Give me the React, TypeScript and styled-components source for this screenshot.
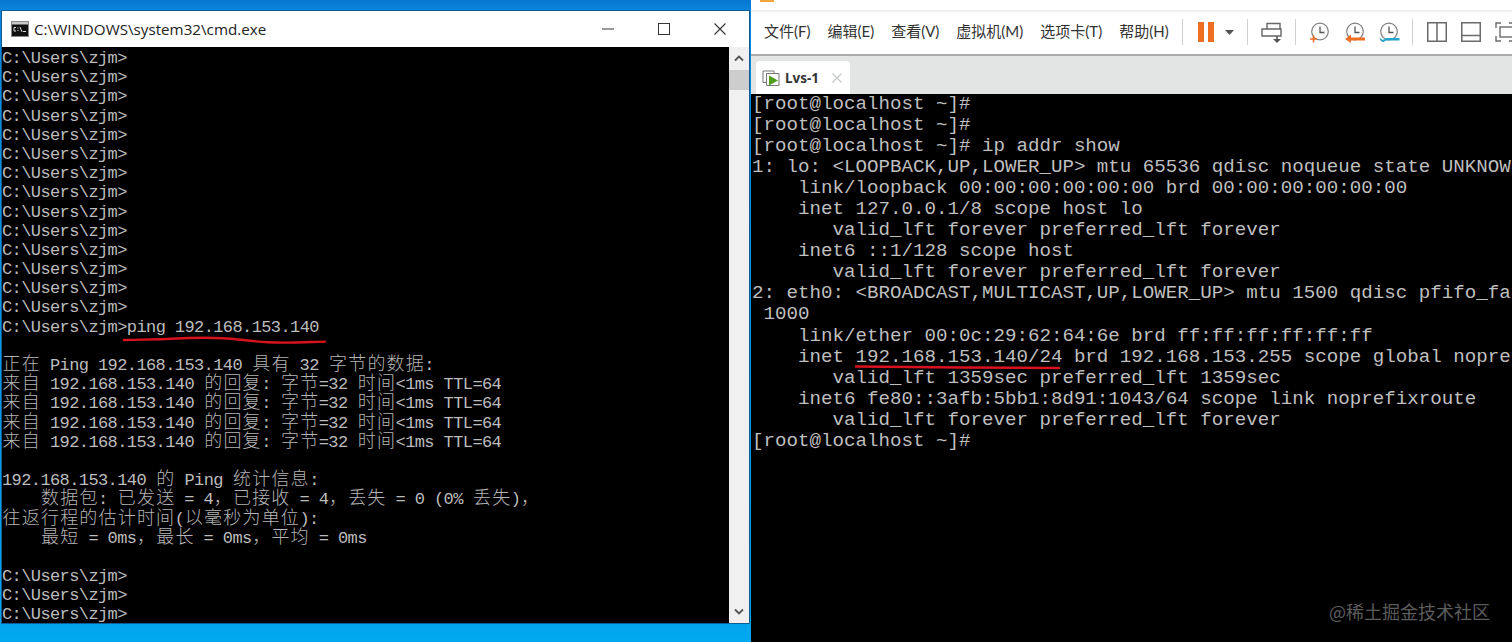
import React from "react";
import styled, { createGlobalStyle } from "styled-components";

const Global = createGlobalStyle`
  html, body { margin: 0; padding: 0; background: #000; overflow: hidden; }
  #root { width: 1512px; height: 642px; overflow: hidden; }
`;

const Desktop = styled.div`
  position: relative;
  display: flex;
  width: 1512px;
  height: 642px;
  background: #000;
  overflow: hidden;
`;

const CmdPane = styled.section`
  width: 751px;
  height: 642px;
  flex: none;
  box-sizing: border-box;
  padding: 11px 2px 19px 2px;
  background: linear-gradient(180deg, #0877d2 0, #0b86dc 10px, #00a4ec 623px, #00a9f0 642px);
  display: flex;
`;

const CmdWindow = styled.div`
  flex: 1;
  display: flex;
  flex-direction: column;
  background: #fff;
  box-shadow: 0 0 0 1px #0e5c94;
`;

const TitleBar = styled.header`
  height: 36px;
  flex: none;
  display: flex;
  align-items: center;
  padding: 0 23px 0 9px;
  background: #fff;
`;

const AppTitle = styled.span`
  margin-left: 5px;
  flex: 1;
  font: 15.2px/20px "Open Sans", "Noto Sans", sans-serif;
  color: #222;
  white-space: pre;
`;

const WinControls = styled.div`
  display: flex;
  align-items: center;
  gap: 44px;
  margin-top: -1px;
`;

const CmdBody = styled.div`
  flex: 1;
  display: flex;
  min-height: 0;
`;

const CmdScreen = styled.div`
  position: relative;
  flex: 1;
  box-sizing: border-box;
  padding-top: 2px;
  background: #000;
  overflow: hidden;
  color: #bcbcbc;
  font: 17px/19.2px "Liberation Mono", monospace;
  letter-spacing: -0.6px;
`;

const CmdLine = styled.div`
  height: 19.2px;
  white-space: pre;
`;

const Wide = styled.span`
  display: inline-block;
  width: 19.2px;
  height: 13.2px;
  vertical-align: top;
  font: 300 18px/13.2px "Noto Sans CJK SC", sans-serif;
  letter-spacing: 0;
  text-align: center;
  color: #b4b4b4;
`;

const ScrollBar = styled.div`
  width: 20px;
  flex: none;
  display: flex;
  flex-direction: column;
  background: #f0f0f0;
`;

const ScrollArrow = styled.div`
  height: 23px;
  display: flex;
  align-items: center;
  justify-content: center;
`;

const ScrollThumb = styled.div`
  height: 20px;
  background: #cdcdcd;
`;

const ScrollTrack = styled.div`
  flex: 1;
`;

const VmPane = styled.section`
  position: relative;
  flex: 1;
  min-width: 0;
  display: flex;
  flex-direction: column;
  background: #fff;
`;

const TopStrip = styled.div`
  height: 10px;
  flex: none;
  padding-left: 9px;
  background: #fff;
  border-bottom: 2px solid #f0f0f0;
`;

const TitleMark = styled.div`
  width: 14px;
  height: 2px;
  background: #f3a33c;
`;

const Toolbar = styled.div`
  height: 40px;
  flex: none;
  display: flex;
  align-items: center;
  padding: 0 0 2px 13px;
  background: #fff;
  border-bottom: 2px solid #a9abab;
`;

const Menu = styled.nav`
  display: flex;
  gap: 17px;
  margin-bottom: 2px;
`;

const MenuItem = styled.span`
  font: 15px/20px Lato, "Noto Sans CJK SC", sans-serif;
  color: #333;
  white-space: pre;
`;

const Separator = styled.div<{ $left: number; $right: number }>`
  width: 1px;
  height: 26px;
  flex: none;
  margin: 0 ${(p) => p.$right}px 0 ${(p) => p.$left}px;
  background: #cfd0d0;
`;

const ToolIcon = styled.svg<{ $gap?: number }>`
  flex: none;
  margin-right: ${(p) => p.$gap ?? 0}px;
`;

const TabStrip = styled.div`
  height: 38px;
  flex: none;
  padding: 5px 0 0 5px;
  box-sizing: border-box;
  background: #e3e5e5;
  display: flex;
`;

const Tab = styled.div`
  width: 94px;
  display: flex;
  align-items: center;
  padding: 0 0 0 6px;
  box-sizing: border-box;
  background: #fff;
  border-radius: 4px 4px 0 0;
`;

const TabLabel = styled.span`
  margin: 0 13px 0 5px;
  font: bold 13.5px/16px "Noto Sans", sans-serif;
  color: #333;
`;

const VmScreen = styled.div`
  position: relative;
  flex: 1;
  padding-left: 1px;
  background: #000;
  overflow: hidden;
  color: #bfbfbf;
  font: 19.17px/21.06px "Liberation Mono", monospace;
`;

const VmLine = styled.div`
  height: 21.06px;
  white-space: pre;
`;

const Scribble = styled.svg<{ $left: number; $top: number }>`
  position: absolute;
  left: ${(p) => p.$left}px;
  top: ${(p) => p.$top}px;
  overflow: visible;
`;

const Watermark = styled.div`
  position: absolute;
  right: 22px;
  bottom: 19px;
  font: 18px/24px "Noto Sans CJK SC", sans-serif;
  color: #5c5c5c;
  white-space: pre;
`;

const prompt = "C:\\Users\\zjm>";
const reply = "来自 192.168.153.140 的回复: 字节=32 时间<1ms TTL=64";

const cmdLines = [
  ...Array(14).fill(prompt),
  prompt + "ping 192.168.153.140",
  "",
  "正在 Ping 192.168.153.140 具有 32 字节的数据:",
  reply,
  reply,
  reply,
  reply,
  "",
  "192.168.153.140 的 Ping 统计信息:",
  "    数据包: 已发送 = 4，已接收 = 4，丢失 = 0 (0% 丢失)，",
  "往返行程的估计时间(以毫秒为单位):",
  "    最短 = 0ms，最长 = 0ms，平均 = 0ms",
  "",
  prompt,
  prompt,
  prompt,
];

const vmPrompt = "[root@localhost ~]#";
const vmLines = [
  vmPrompt,
  vmPrompt,
  vmPrompt + " ip addr show",
  "1: lo: <LOOPBACK,UP,LOWER_UP> mtu 65536 qdisc noqueue state UNKNOWN",
  "    link/loopback 00:00:00:00:00:00 brd 00:00:00:00:00:00",
  "    inet 127.0.0.1/8 scope host lo",
  "       valid_lft forever preferred_lft forever",
  "    inet6 ::1/128 scope host",
  "       valid_lft forever preferred_lft forever",
  "2: eth0: <BROADCAST,MULTICAST,UP,LOWER_UP> mtu 1500 qdisc pfifo_fast state",
  " 1000",
  "    link/ether 00:0c:29:62:64:6e brd ff:ff:ff:ff:ff:ff",
  "    inet 192.168.153.140/24 brd 192.168.153.255 scope global noprefixroute",
  "       valid_lft 1359sec preferred_lft 1359sec",
  "    inet6 fe80::3afb:5bb1:8d91:1043/64 scope link noprefixroute",
  "       valid_lft forever preferred_lft forever",
  vmPrompt,
];

const menus = ["文件(F)", "编辑(E)", "查看(V)", "虚拟机(M)", "选项卡(T)", "帮助(H)"];

function renderCells(text: string) {
  const out: React.ReactNode[] = [];
  let run = "";
  Array.from(text).forEach((ch, i) => {
    if (ch.charCodeAt(0) > 0x2e7f) {
      if (run) out.push(run);
      run = "";
      out.push(<Wide key={i}>{ch}</Wide>);
    } else {
      run += ch;
    }
  });
  if (run) out.push(run);
  return out;
}

const CmdIcon = () => (
  <svg width="18" height="16" viewBox="0 0 18 16">
    <rect x="0.5" y="0.5" width="17" height="15" fill="#111" stroke="#8a8a8a" />
    <rect x="1" y="1" width="16" height="2.5" fill="#c9c9c9" />
    <path d="M3 6.5H5M3 6.5V10H5M6.5 7H7.5M6.5 9.5H7.5M9 6L11 11M12 10.5H15" stroke="#ddd" fill="none" strokeWidth="1" />
  </svg>
);

const Minimize = () => (
  <svg width="12" height="12" viewBox="0 0 12 12">
    <path d="M0 6H12" stroke="#333" strokeWidth="1" />
  </svg>
);
const Maximize = () => (
  <svg width="12" height="12" viewBox="0 0 12 12">
    <rect x="0.5" y="0.5" width="11" height="11" fill="none" stroke="#333" strokeWidth="1" />
  </svg>
);
const CloseIcon = () => (
  <svg width="12" height="12" viewBox="0 0 12 12">
    <path d="M0.5 0.5L11.5 11.5M11.5 0.5L0.5 11.5" stroke="#333" strokeWidth="1.1" />
  </svg>
);

const Chevron = ({ up }: { up?: boolean }) => (
  <svg width="10" height="7" viewBox="0 0 10 7">
    <path d={up ? "M1 5.5L5 1.5L9 5.5" : "M1 1.5L5 5.5L9 1.5"} fill="none" stroke="#555" strokeWidth="1.8" />
  </svg>
);

const TabVmIcon = () => (
  <svg width="18" height="18" viewBox="0 0 18 18">
    <path d="M4.5 13.5H1V2H12V4" fill="none" stroke="#777" strokeWidth="1" />
    <path d="M4.5 4.5H17V16.5H4.5Z" fill="#fff" stroke="#777" strokeWidth="1" />
    <path d="M7 6.5L16 11.5L7 16.5Z" fill="#4f9e1e" />
  </svg>
);

const TabClose = () => (
  <svg width="10" height="10" viewBox="0 0 10 10">
    <path d="M0.5 0.5L9.5 9.5M9.5 0.5L0.5 9.5" stroke="#c6c8c8" strokeWidth="1.3" />
  </svg>
);

const Clock = ({ cx }: { cx: number }) => (
  <>
    <circle cx={cx} cy="9.5" r="8.3" fill="none" stroke="#808080" strokeWidth="1.2" />
    <path d={`M${cx} 4.5V10.5H${cx + 4.5}`} fill="none" stroke="#555" strokeWidth="1.3" />
  </>
);

export default function App() {
  return (
    <Desktop>
      <Global />
      <CmdPane>
        <CmdWindow>
          <TitleBar>
            <CmdIcon />
            <AppTitle>C:\WINDOWS\system32\cmd.exe</AppTitle>
            <WinControls>
              <Minimize />
              <Maximize />
              <CloseIcon />
            </WinControls>
          </TitleBar>
          <CmdBody>
            <CmdScreen>
              {cmdLines.map((l, i) => (
                <CmdLine key={i}>{renderCells(l)}</CmdLine>
              ))}
              <Scribble $left={121} $top={290} width="204" height="8" viewBox="0 0 204 8">
                <path
                  d="M1 3C20 2.5 35 2.5 48 1.8S85 0.5 100 1.2S125 4 145 5.2S185 5 202 4.6"
                  fill="none"
                  stroke="#d8121e"
                  strokeWidth="2.4"
                  strokeLinecap="round"
                />
              </Scribble>
            </CmdScreen>
            <ScrollBar>
              <ScrollArrow>
                <Chevron up />
              </ScrollArrow>
              <ScrollThumb />
              <ScrollTrack />
              <ScrollArrow>
                <Chevron />
              </ScrollArrow>
            </ScrollBar>
          </CmdBody>
        </CmdWindow>
      </CmdPane>
      <VmPane>
        <TopStrip>
          <TitleMark />
        </TopStrip>
        <Toolbar>
          <Menu>
            {menus.map((m) => (
              <MenuItem key={m}>{m}</MenuItem>
            ))}
          </Menu>
          <Separator $left={13} $right={15} />
          <ToolIcon $gap={11} width="16" height="20" viewBox="0 0 16 20">
            <rect x="0" y="0" width="6" height="20" fill="#ee6f24" />
            <rect x="10" y="0" width="6" height="20" fill="#ee6f24" />
          </ToolIcon>
          <ToolIcon width="9" height="5" viewBox="0 0 9 5">
            <path d="M0 0H9L4.5 5Z" fill="#555" />
          </ToolIcon>
          <Separator $left={13} $right={13} />
          <ToolIcon width="21" height="21" viewBox="0 0 21 21">
            <path d="M6 7V1.5H19V7M1 7H20V14H1Z" fill="#fff" stroke="#666" strokeWidth="1.4" />
            <path d="M16 14V18" stroke="#555" strokeWidth="1.6" />
            <path d="M12 17H20L16 21Z" fill="#555" />
          </ToolIcon>
          <Separator $left={13} $right={14} />
          <ToolIcon $gap={14} width="21" height="21" viewBox="0 0 21 21">
            <Clock cx={10} />
            <path d="M0 17H7M3.5 13.5V20.5" stroke="#ee6f24" strokeWidth="1.6" />
          </ToolIcon>
          <ToolIcon $gap={13} width="21" height="21" viewBox="0 0 21 21">
            <Clock cx={10} />
            <path d="M5 15.5H20V18.5H5Z" fill="#ee6f24" />
            <path d="M6 12.5V21L0 17Z" fill="#ee6f24" />
          </ToolIcon>
          <ToolIcon width="21" height="21" viewBox="0 0 21 21">
            <Clock cx={10} />
            <path d="M0.5 14.5C2 18.5 5 18.5 7 16H20.5V18.5H7C4.5 21 1 20.5 0.5 14.5Z" fill="#22a5c8" />
          </ToolIcon>
          <Separator $left={12} $right={14} />
          <ToolIcon $gap={14} width="20" height="20" viewBox="0 0 20 20">
            <path d="M0.75 0.75H19.25V19.25H0.75ZM10 0.75V19.25" fill="none" stroke="#6b6b6b" strokeWidth="1.5" />
          </ToolIcon>
          <ToolIcon $gap={14} width="20" height="20" viewBox="0 0 20 20">
            <path d="M0.75 0.75H19.25V19.25H0.75ZM0.75 13.5H19.25" fill="none" stroke="#6b6b6b" strokeWidth="1.5" />
          </ToolIcon>
          <ToolIcon width="20" height="20" viewBox="0 0 20 20">
            <path d="M1 6V1H6M1 14V19H6M14 1H19M14 19H19" fill="none" stroke="#6b6b6b" strokeWidth="1.4" />
            <rect x="5" y="5" width="14" height="10" fill="none" stroke="#6b6b6b" strokeWidth="1.4" />
          </ToolIcon>
        </Toolbar>
        <TabStrip>
          <Tab>
            <TabVmIcon />
            <TabLabel>Lvs-1</TabLabel>
            <TabClose />
          </Tab>
        </TabStrip>
        <VmScreen>
          {vmLines.map((l, i) => (
            <VmLine key={i}>{l}</VmLine>
          ))}
          <Scribble $left={104} $top={271} width="206" height="5" viewBox="0 0 206 5">
            <path d="M1 1.5C50 2 150 3 204 3" fill="none" stroke="#d8121e" strokeWidth="2.4" strokeLinecap="round" />
          </Scribble>
        </VmScreen>
        <Watermark>@稀土掘金技术社区</Watermark>
      </VmPane>
    </Desktop>
  );
}
